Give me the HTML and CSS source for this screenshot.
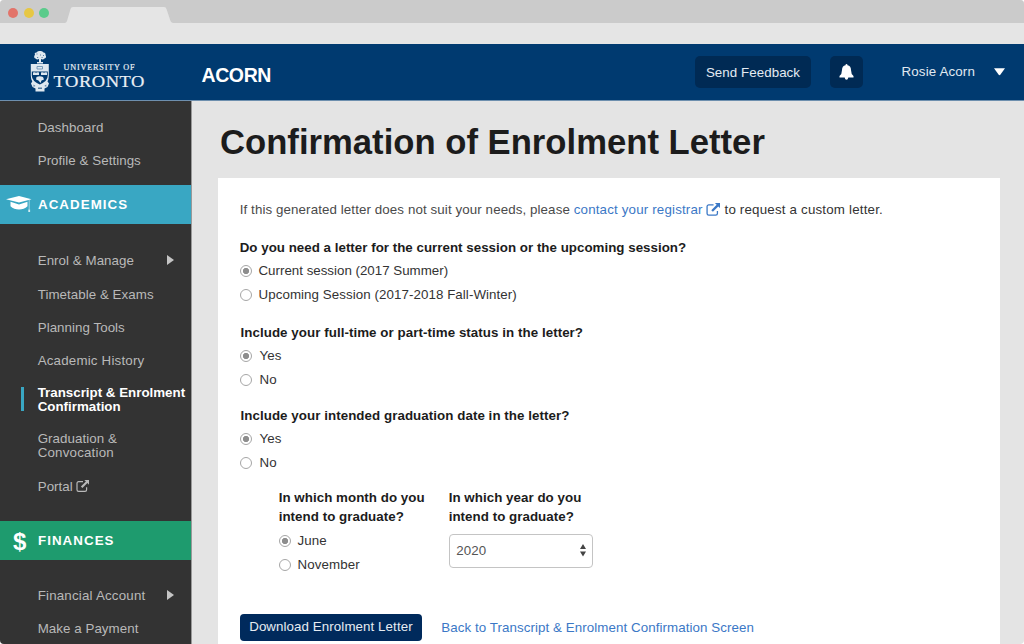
FILE: index.html
```html
<!DOCTYPE html>
<html lang="en">
<head>
<meta charset="utf-8">
<title>ACORN - Confirmation of Enrolment Letter</title>
<link rel="stylesheet" href="styles.css">
</head>
<body>
<svg width="0" height="0" class="defs">
  <symbol id="external" viewBox="0 0 13 12">
    <path d="M7 1.7H2.6A1.6 1.6 0 0 0 1 3.300V9.700A1.600 1.600 0 0 0 2.600 11.300H9A1.600 1.600 0 0 0 10.600 9.700V7.300" fill="none" stroke="currentColor" stroke-width="1.200"/>
    <path d="M8.300 0H13V4.700L11.400 3.100 6.400 8.100 4.900 6.600 9.900 1.600Z" fill="currentColor"/>
  </symbol>
</svg>
<div class="window">
  <div class="chrome">
    <div class="tabs">
      <i class="dot red"></i><i class="dot yellow"></i><i class="dot green"></i>
      <svg class="tab" width="108" height="16"><path d="M0 16Q1.500 15.500 2 14L5.500 2Q6 0 8 0H99Q101 0 101.500 2L105.500 14Q106 15.500 108 16Z" fill="#e5e5e5"/></svg>
    </div>
  </div>
  <header class="header">
    <svg class="logo" width="120" height="46" viewBox="28 49 120 46">
      <g fill="#dfe8f0">
        <path d="M35 54.500Q34 52.500 36.500 52.500Q37.500 50.500 40 51Q42.500 50.500 43.500 52.500Q46 53 45.500 55Q47 57.500 44.500 58.500Q43 60 41 59V62H43V63.500H37V62H39V59Q37 60 35.500 58.500Q33 57.500 35 54.500Z"/>
        <path d="M30.800 64H48.800V75.500Q48.800 79 47.500 81.500L49 83.500 47.500 87 44.500 88.500V91.500H35.500V88.500L32.500 87 31 83.500 32.300 81.500Q30.800 79 30.800 75.500Z"/>
      </g>
      <g fill="#003a70">
        <path d="M31.800 71.500H47.800V75.500Q47.800 81 39.800 84.500 31.800 81 31.800 75.500Z"/>
        <path opacity=".6" d="M36.500 53.500h1v1h-1zM40 54.500h1v1h-1zM43 55h1v1h-1zM37 57h1.200v1h-1.200zM41.600 57h1v1h-1zM33.500 84.500l2 1.500-2 .7zM46.300 84.500l-2 1.500 2 .7zM38 87.500h4v1.500h-4z"/>
      </g>
      <g fill="#dfe8f0">
        <path d="M33 72.500Q35 71.800 36 72.700Q37.500 71.800 39 72.500V75H33ZM41 72.500Q43 71.800 44 72.700Q45.500 71.800 47 72.500V75H41ZM36.500 77Q39.500 75.500 43 77L44 79.500 41.500 80.500 40.500 83 38.500 80.500 36 79.500Z"/>
      </g>
      <g fill="none" stroke="#6089ad" stroke-width=".8"><path d="M37 66.500h5.500v2.500H37z"/></g>
      <g class="logo-text">
        <text x="63.500" y="70" font-size="8.200" textLength="71" lengthAdjust="spacing">UNIVERSITY OF</text>
        <text x="53.500" y="86.500" font-size="17.500" textLength="91.500" lengthAdjust="spacingAndGlyphs" letter-spacing=".5">TORONTO</text>
      </g>
    </svg>
    <div class="brand">ACORN</div>
    <button class="dark feedback">Send Feedback</button>
    <button class="dark bell"><svg width="15" height="16" viewBox="0 0 15 16"><path d="M7.500 0Q8.500 0 8.500 1.300Q12 2 12 6Q12 10 14.500 12V13.500H9.300Q9 15.800 7.500 15.800T5.700 13.500H.5V12Q3 10 3 6Q3 2 6.500 1.300Q6.500 0 7.500 0Z" fill="#fff"/></svg></button>
    <div class="user">Rosie Acorn</div>
    <svg class="caret" width="11" height="8"><path d="M0 .3H11L6.500 6.600Q5.500 7.800 4.500 6.600Z" fill="#fff"/></svg>
  </header>
  <div class="body">
    <nav class="sidebar">
      <ul class="menu top"><li>Dashboard</li><li>Profile &amp; Settings</li></ul>
      <div class="section academics">
        <svg width="26" height="17" viewBox="0 0 26 17"><path d="M0 3.200L13 0 25.500 3.200 13 6.600Z" fill="#fff"/><path d="M4.500 5.800L13 8.500 21.500 5.800V10.200Q18 13.500 13 13.500T4.500 10.200Z" fill="#fff"/><path d="M23.200 4V13.500" stroke="#b9e0ea" stroke-width=".8"/><path d="M22.300 13.500h1.800V16h-1.800z" fill="#d5edf3"/></svg>
        <span>ACADEMICS</span>
      </div>
      <ul class="menu main">
        <li class="parent">Enrol &amp; Manage<i></i></li>
        <li>Timetable &amp; Exams</li>
        <li>Planning Tools</li>
        <li class="wide">Academic History</li>
        <li class="current">Transcript &amp; Enrolment<br>Confirmation</li>
        <li>Graduation &amp;<br><span class="wide">Convocation</span></li>
        <li class="portal">Portal<svg width="13" height="12"><use href="#external"/></svg></li>
      </ul>
      <div class="section finances"><b>$</b><span>FINANCES</span></div>
      <ul class="menu money"><li class="parent wide">Financial Account<i></i></li><li>Make a Payment</li></ul>
    </nav>
    <main class="content">
      <h1>Confirmation of Enrolment Letter</h1>
      <div class="panel">
        <p class="intro"><span class="lead">If this generated letter does not suit your needs, please</span> <a>contact your registrar<svg width="14" height="13"><use href="#external"/></svg></a> <span class="tail">to request a custom letter.</span></p>
        <section class="question">
          <h2 class="q1">Do you need a letter for the current session or the upcoming session?</h2>
          <label><i class="radio on"></i>Current session (2017 Summer)</label>
          <label class="upcoming"><i class="radio"></i>Upcoming Session (2017-2018 Fall-Winter)</label>
        </section>
        <section class="question shifted">
          <h2>Include your full-time or part-time status in the letter?</h2>
          <label><i class="radio on"></i>Yes</label>
          <label><i class="radio"></i>No</label>
        </section>
        <section class="question shifted">
          <h2>Include your intended graduation date in the letter?</h2>
          <label><i class="radio on"></i>Yes</label>
          <label><i class="radio"></i>No</label>
        </section>
        <div class="dates">
          <section class="month">
            <h2>In which month do you<br>intend to graduate?</h2>
            <label><i class="radio on"></i>June</label>
            <label><i class="radio"></i>November</label>
          </section>
          <section class="year">
            <h2>In which year do you<br>intend to graduate?</h2>
            <div class="select"><span>2020</span><svg width="6" height="13"><path d="M0 5L3 0 6 5ZM0 7.500H6L3 12.500Z" fill="#444"/></svg></div>
          </section>
        </div>
        <div class="actions"><button class="download">Download Enrolment Letter</button><a>Back to Transcript &amp; Enrolment Confirmation Screen</a></div>
      </div>
    </main>
  </div>
</div>
</body>
</html>
```
FILE: styles.css
```css
* { box-sizing: border-box; }
html { background: #fff; }
body { margin: 0; font: 13.33px/24px "Liberation Sans", Arial, sans-serif; color: #333; }
h1, h2, p, ul { margin: 0; padding: 0; }
ul { list-style: none; }
button { font: inherit; border: 0; padding: 0; white-space: nowrap; }
a { color: #3b78c6; white-space: nowrap; }
.defs { display: block; width: 0; height: 0; }
.window { height: 644px; overflow: hidden; border-radius: 4px; background: #e4e4e4; display: flex; flex-direction: column; }

.chrome { height: 44px; flex: none; background: #e5e5e5; }
.tabs { height: 23px; background: #cbcbcb; display: flex; align-items: flex-end; padding-left: 8px; }
.dot { width: 10px; height: 10px; border-radius: 50%; margin: 0 5.500px 5.500px 0; }
.red { background: #e2746a; }
.yellow { background: #e6c744; }
.green { background: #5acb8b; }
.tab { margin-left: 10px; }

.header { height: 57px; flex: none; background: #003a70; border-bottom: 1px solid #6e8fae; display: flex; align-items: flex-start; color: #fff; }
.logo { margin: 5px 0 0 28px; flex: none; }
.logo-text { font-family: "Liberation Serif", serif; fill: #e9eff5; stroke: #e9eff5; stroke-width: .2px; }
.brand { margin: 19px 0 0 53.500px; width: 493.500px; font-weight: bold; font-size: 19.500px; line-height: 24px; letter-spacing: -.4px; }
.dark { height: 32px; margin-top: 12px; border-radius: 5px; background: #002a54; color: #e4ebf2; }
.feedback { width: 116px; padding-top: 2px; letter-spacing: .06px; }
.bell { width: 33.500px; margin-left: 18.500px; padding-right: .5px; display: flex; align-items: center; justify-content: center; }
.user { margin: 16px 0 0 38.500px; width: 92.500px; color: #e0e9f1; letter-spacing: .15px; }
.caret { margin-top: 24px; }

.body { flex: 1; display: flex; min-height: 0; }
.sidebar { width: 191.500px; flex: none; background: #333; border-right: 1px solid #999; color: #b9b9b9; }
.menu { display: flex; flex-direction: column; gap: 19.200px; line-height: 13.500px; padding-left: 37.700px; white-space: nowrap; letter-spacing: .05px; }
.wide { letter-spacing: .19px; }
.top { height: 84px; padding-top: 20px; gap: 19.700px; }
.section { height: 38.500px; display: flex; align-items: center; color: #fff; font-weight: bold; letter-spacing: 1.050px; }
.section span { padding-top: 1.500px; }
.academics { background: #39a7c3; }
.academics svg { margin: 0 6px 0 6px; }
.finances { background: #1e9b6e; }
.finances b { width: 38px; padding: 3px 0 0 13px; font-size: 24px; letter-spacing: 0; }
.main { height: 297.500px; padding-top: 30.300px; }
.parent { position: relative; }
.parent i { position: absolute; left: 129px; top: 1px; border-left: 7px solid #c5c5c5; border-top: 5.500px solid transparent; border-bottom: 5.500px solid transparent; }
.main .parent { margin-bottom: 1.700px; }
.current { position: relative; color: #fff; font-weight: bold; letter-spacing: 0; }
.current::before { content: ""; position: absolute; left: -17px; top: 1px; width: 3px; height: 24px; background: #39a7c3; }
.portal { margin-top: 1.300px; }
.portal svg { margin-left: 3px; vertical-align: -1px; }
.money { padding-top: 29.500px; }

.content { flex: 1; padding-left: 26.500px; }
h1 { margin-left: 2px; height: 77px; font-size: 34.670px; line-height: 82px; color: #1c1c1c; white-space: nowrap; }
.panel { width: 782px; height: 480px; background: #fff; padding: 20px 0 0 21.700px; }
.intro { white-space: nowrap; color: #4a4a4a; height: 38px; letter-spacing: .1px; }
.intro a { letter-spacing: .17px; }
.intro svg { margin: 0 1px 0 3px; vertical-align: -2px; }
.tail { color: #333; letter-spacing: .19px; }
h2 { font-size: 13.330px; line-height: 23px; color: #1c1c1c; letter-spacing: .06px; }
.q1 { letter-spacing: .02px; }
.question { margin-bottom: 12.700px; }
.question + .shifted { margin-top: 13.500px; }
.question:first-of-type { margin-bottom: 0; }
.shifted { padding-left: .8px; }
.shifted + .shifted { margin-top: 0 !important; }
.shifted label { letter-spacing: .1px; }
.shifted .radio { margin-right: 7px; }
label { display: flex; align-items: center; height: 24px; }
.upcoming { letter-spacing: .07px; }
.radio { width: 12px; height: 12px; border: 1px solid #a6a6a6; border-radius: 50%; margin-right: 6.800px; }
.on { background: radial-gradient(circle, #8e8e8e 2.800px, #fff 3.400px); }
.dates { display: flex; padding-left: 39px; height: 126px; }
.dates h2 { line-height: 19.500px; margin-bottom: 2px; letter-spacing: .04px; }
.month { width: 170px; }
.month label { letter-spacing: .1px; }
.select { width: 144px; height: 34px; margin-top: 7px; border: 1px solid #c4c4c4; border-radius: 4px; display: flex; align-items: center; justify-content: space-between; padding: 0 6px 0 6.500px; color: #555; letter-spacing: .15px; }
.actions { display: flex; align-items: center; }
.actions a { letter-spacing: .08px; padding-top: 1px; }
.download { width: 182.500px; height: 27px; border-radius: 4px; background: #002a5c; color: #e6ecf2; margin-right: 19px; letter-spacing: .08px; }
```
